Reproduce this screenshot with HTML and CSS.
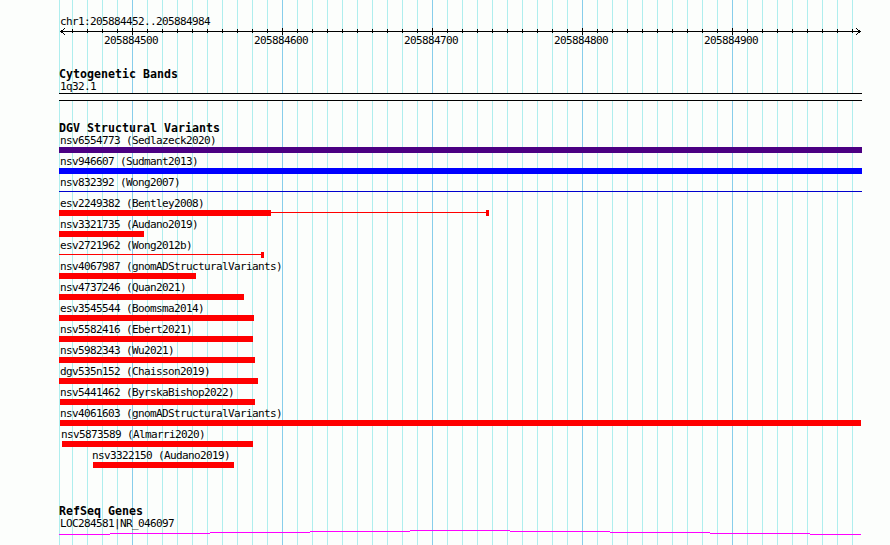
FILE: index.html
```
<!DOCTYPE html>
<html lang="en">
<head>
    <meta charset="UTF-8">
    <title>chr1:205884452..205884984</title>
    <link rel="stylesheet" href="styles.css">
</head>
<body>
    <div class="browser">
        <header class="ruler">
            <div class="label">chr1:205884452..205884984</div>
            <svg class="scale" width="803" height="9" shape-rendering="crispEdges">
                <path class="axis" d="M1 4.5H802"/>
                <path class="ticks" d="M13 4H802"/>
                <path class="major" d="M73 4.5H802"/>
                <path class="arrow" d="M5 1h1v1h-1zM4 2h1v1h-1zM2 3h2v1h-2zM1 4h1v1h-1zM2 5h2v1h-2zM4 6h1v1h-1zM5 7h1v1h-1z"/>
                <path class="arrow" d="M797 1h1v1h-1zM798 2h1v1h-1zM799 3h2v1h-2zM801 4h1v1h-1zM799 5h2v1h-2zM798 6h1v1h-1zM797 7h1v1h-1z"/>
            </svg>
            <div class="numbers">
                <span>205884500</span>
                <span>205884600</span>
                <span>205884700</span>
                <span>205884800</span>
                <span>205884900</span>
            </div>
        </header>

        <section class="bands">
            <h2>Cytogenetic Bands</h2>
            <div class="label">1q32.1</div>
            <div class="band"></div>
        </section>

        <section class="variants">
            <h2>DGV Structural Variants</h2>
            <div class="feature"><div class="label">nsv6554773 (Sedlazeck2020)</div><div class="bar indigo" style="width: 803px"></div></div>
            <div class="feature"><div class="label">nsv946607 (Sudmant2013)</div><div class="bar blue" style="width: 803px"></div></div>
            <div class="feature"><div class="label">nsv832392 (Wong2007)</div><div class="line navy" style="width: 803px"></div></div>
            <div class="feature"><div class="label">esv2249382 (Bentley2008)</div><div class="span"><div class="bar" style="width: 212px"></div><div class="line" style="width: 215px"></div><div class="bar end"></div></div></div>
            <div class="feature"><div class="label">nsv3321735 (Audano2019)</div><div class="bar" style="width: 85px"></div></div>
            <div class="feature"><div class="label">esv2721962 (Wong2012b)</div><div class="span"><div class="line" style="width: 202px"></div><div class="bar end"></div></div></div>
            <div class="feature"><div class="label">nsv4067987 (gnomADStructuralVariants)</div><div class="bar" style="width: 137px"></div></div>
            <div class="feature"><div class="label">nsv4737246 (Quan2021)</div><div class="bar" style="width: 185px"></div></div>
            <div class="feature"><div class="label">esv3545544 (Boomsma2014)</div><div class="bar" style="width: 195px"></div></div>
            <div class="feature"><div class="label">nsv5582416 (Ebert2021)</div><div class="bar" style="width: 194px"></div></div>
            <div class="feature"><div class="label">nsv5982343 (Wu2021)</div><div class="bar" style="width: 196px"></div></div>
            <div class="feature"><div class="label">dgv535n152 (Chaisson2019)</div><div class="bar" style="width: 199px"></div></div>
            <div class="feature"><div class="label">nsv5441462 (ByrskaBishop2022)</div><div class="bar" style="margin-left: 1px; width: 195px"></div></div>
            <div class="feature"><div class="label">nsv4061603 (gnomADStructuralVariants)</div><div class="bar" style="margin-left: 1px; width: 801px"></div></div>
            <div class="feature" style="margin-left: 1px"><div class="label">nsv5873589 (Almarri2020)</div><div class="bar" style="margin-left: 2px; width: 191px"></div></div>
            <div class="feature" style="margin-left: 32px"><div class="label">nsv3322150 (Audano2019)</div><div class="bar" style="margin-left: 2px; width: 141px"></div></div>
        </section>

        <section class="genes">
            <h2>RefSeq Genes</h2>
            <div class="label">LOC284581|NR_046097</div>
            <svg class="gene" width="803" height="6" shape-rendering="crispEdges">
                <path d="M0 4.5H51M51 3.5H151M151 2.5H251M251 1.5H351M351 .5H451M451 1.5H551M551 2.5H651M651 3.5H751M751 4.5H802"/>
            </svg>
        </section>
    </div>
</body>
</html>
```
FILE: styles.css
```
body {
    margin: 0;
    background-color: #fcfefc;
    color: #000;
    font-family: "DejaVu Sans Mono", monospace;
}

.browser {
    box-sizing: border-box;
    width: 803px;
    height: 545px;
    margin-left: 59px;
    padding-top: 15px;
    overflow: hidden;
    /* left edge, major line every 150px, minor line every 15px */
    background-image:
        linear-gradient(#afeeee, #afeeee),
        linear-gradient(to right, #87ceeb 1px, transparent 1px),
        linear-gradient(to right, #afeeee 1px, transparent 1px);
    background-size: 1px 100%, 150px 100%, 15px 100%;
    background-position: 0 0, 73px 0, 13px 0;
    background-repeat: no-repeat, repeat-x, repeat-x;
}

.label {
    height: 13px;
    padding-left: 1px;
    font-size: 11px;
    line-height: 14px;
    letter-spacing: -0.622px;
    white-space: pre;
}

h2 {
    height: 12px;
    margin: 0;
    font-size: 11.6px;
    line-height: 12px;
    letter-spacing: 0.016px;
    white-space: pre;
}

.ruler {
    height: 53px;
}

.scale {
    display: block;
    margin-top: -1px;
}

.axis, .ticks, .major {
    fill: none;
    stroke: #000;
}

.ticks {
    stroke-width: 4px;
    stroke-dasharray: 1 14;
}

.major {
    stroke-width: 7px;
    stroke-dasharray: 1 149;
}

.numbers {
    display: flex;
    margin-top: -1px;
    padding-left: 45px;
    font-size: 11px;
    line-height: 12px;
    letter-spacing: -0.622px;
}

.numbers span {
    width: 150px;
}

.bands {
    height: 54px;
}

.band {
    height: 6px;
    border-top: 1px solid #000;
    border-bottom: 1px solid #000;
    background-color: #fcfefc;
}

.variants {
    height: 383px;
}

.feature {
    height: 21px;
}

.bar {
    height: 6px;
    background-color: #f00;
}

.line {
    height: 1px;
    margin-top: 2px;
    background-color: #f00;
}

.end {
    width: 3px;
}

.span {
    display: flex;
}

.indigo {
    background-color: #4b0082;
}

.blue {
    background-color: #00f;
}

.navy {
    background-color: #0000cd;
}

.gene {
    display: block;
}

.gene path {
    fill: none;
    stroke: #f0f;
}
```
